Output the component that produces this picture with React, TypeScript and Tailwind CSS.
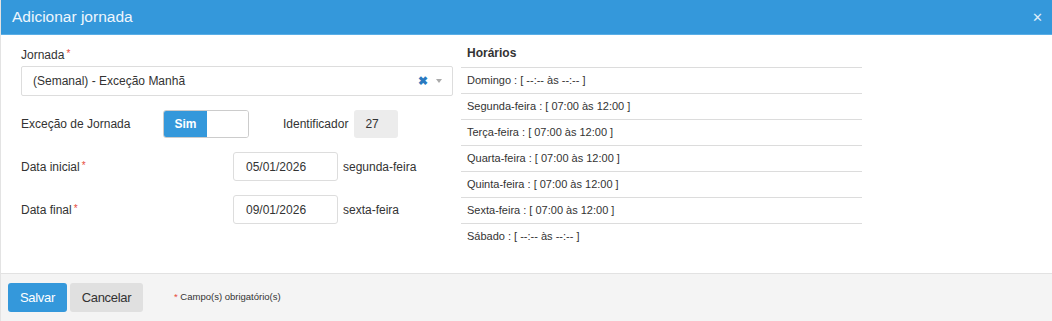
const horarios = [
  "Domingo : [ --:-- às --:-- ]",
  "Segunda-feira : [ 07:00 às 12:00 ]",
  "Terça-feira : [ 07:00 às 12:00 ]",
  "Quarta-feira : [ 07:00 às 12:00 ]",
  "Quinta-feira : [ 07:00 às 12:00 ]",
  "Sexta-feira : [ 07:00 às 12:00 ]",
  "Sábado : [ --:-- às --:-- ]",
];

function Req() {
  return <span className="text-[#e74c3c] text-[10px] ml-[2px] relative -top-[2px]">*</span>;
}

export default function App() {
  return (
    <div
      className="w-[1052px] h-[321px] bg-white flex flex-col text-[#333] border-l border-[#e3e3e3]"
      style={{ fontFamily: "'Liberation Sans', Arial, sans-serif" }}
    >
      {/* Header */}
      <div className="h-[35px] bg-[#3498db] border-b border-[#5aaee6] flex items-center justify-between pl-[11px] pr-[9px]">
        <h1 className="text-[15.5px] text-[#eef6fd]">Adicionar jornada</h1>
        <span className="text-[#dcecf9] text-[13px] leading-none">✕</span>
      </div>

      {/* Body */}
      <div className="flex-1 flex pl-[20px] gap-[8px] text-[12px]">
        <div className="w-[432px] pt-[11px]">
          <div className="h-[18px] leading-[18px]">
            Jornada
            <Req />
          </div>
          <div className="mt-[2px] h-[30px] border border-[#ddd] rounded-[2px] flex items-center pl-[11px] pr-[10px]">
            <span className="flex-1">(Semanal) - Exceção Manhã</span>
            <span className="text-[#2a7ac0] text-[12px] font-bold mr-[8px]">✖</span>
            <span className="w-0 h-0 border-l-[3px] border-r-[3px] border-t-[4px] border-l-transparent border-r-transparent border-t-[#aaa]" />
          </div>

          <div className="mt-[14px] h-[28px] flex items-center">
            <span className="w-[142px]">Exceção de Jornada</span>
            <div className="w-[86px] h-[28px] border border-[#ccc] rounded-[3px] flex overflow-hidden">
              <div className="w-[43px] bg-[#3498db] text-white font-bold text-[12px] flex items-center justify-center">Sim</div>
              <div className="flex-1 bg-white" />
            </div>
            <span className="ml-[34px]">Identificador</span>
            <div className="ml-[6px] w-[44px] h-[28px] bg-[#ececec] rounded-[3px] flex items-center pl-[11px]">27</div>
          </div>

          <div className="mt-[14px] h-[29px] flex items-center">
            <span className="w-[212px]">
              Data inicial
              <Req />
            </span>
            <div className="w-[105px] h-[29px] border border-[#ddd] rounded-[3px] flex items-center pl-[12px]">05/01/2026</div>
            <span className="ml-[5px]">segunda-feira</span>
          </div>

          <div className="mt-[14px] h-[29px] flex items-center">
            <span className="w-[212px]">
              Data final
              <Req />
            </span>
            <div className="w-[105px] h-[29px] border border-[#ddd] rounded-[3px] flex items-center pl-[12px]">09/01/2026</div>
            <span className="ml-[5px]">sexta-feira</span>
          </div>
        </div>

        <div className="w-[401px] pt-[9px]">
          <div className="h-[18px] leading-[18px] pl-[6px] font-bold text-[12px] mb-[5px]">Horários</div>
          {horarios.map((h) => (
            <div key={h} className="h-[26px] flex items-center pl-[6px] text-[11px] border-t border-[#dcdcdc]">
              {h}
            </div>
          ))}
        </div>
      </div>

      {/* Footer */}
      <div className="h-[48px] bg-[#f4f4f4] border-t border-[#e2e2e2] flex items-center pl-[7px]">
        <button className="w-[59px] h-[29px] bg-[#3498db] text-white text-[13px] tracking-[-0.3px] rounded-[3px]">Salvar</button>
        <button className="ml-[3px] w-[73px] h-[29px] bg-[#e0e0e0] text-[#333] text-[13px] tracking-[-0.3px] rounded-[3px]">Cancelar</button>
        <span className="ml-[31px] text-[9.5px] text-[#333]">
          <span className="text-[#e74c3c]">*</span> Campo(s) obrigatório(s)
        </span>
      </div>
    </div>
  );
}
